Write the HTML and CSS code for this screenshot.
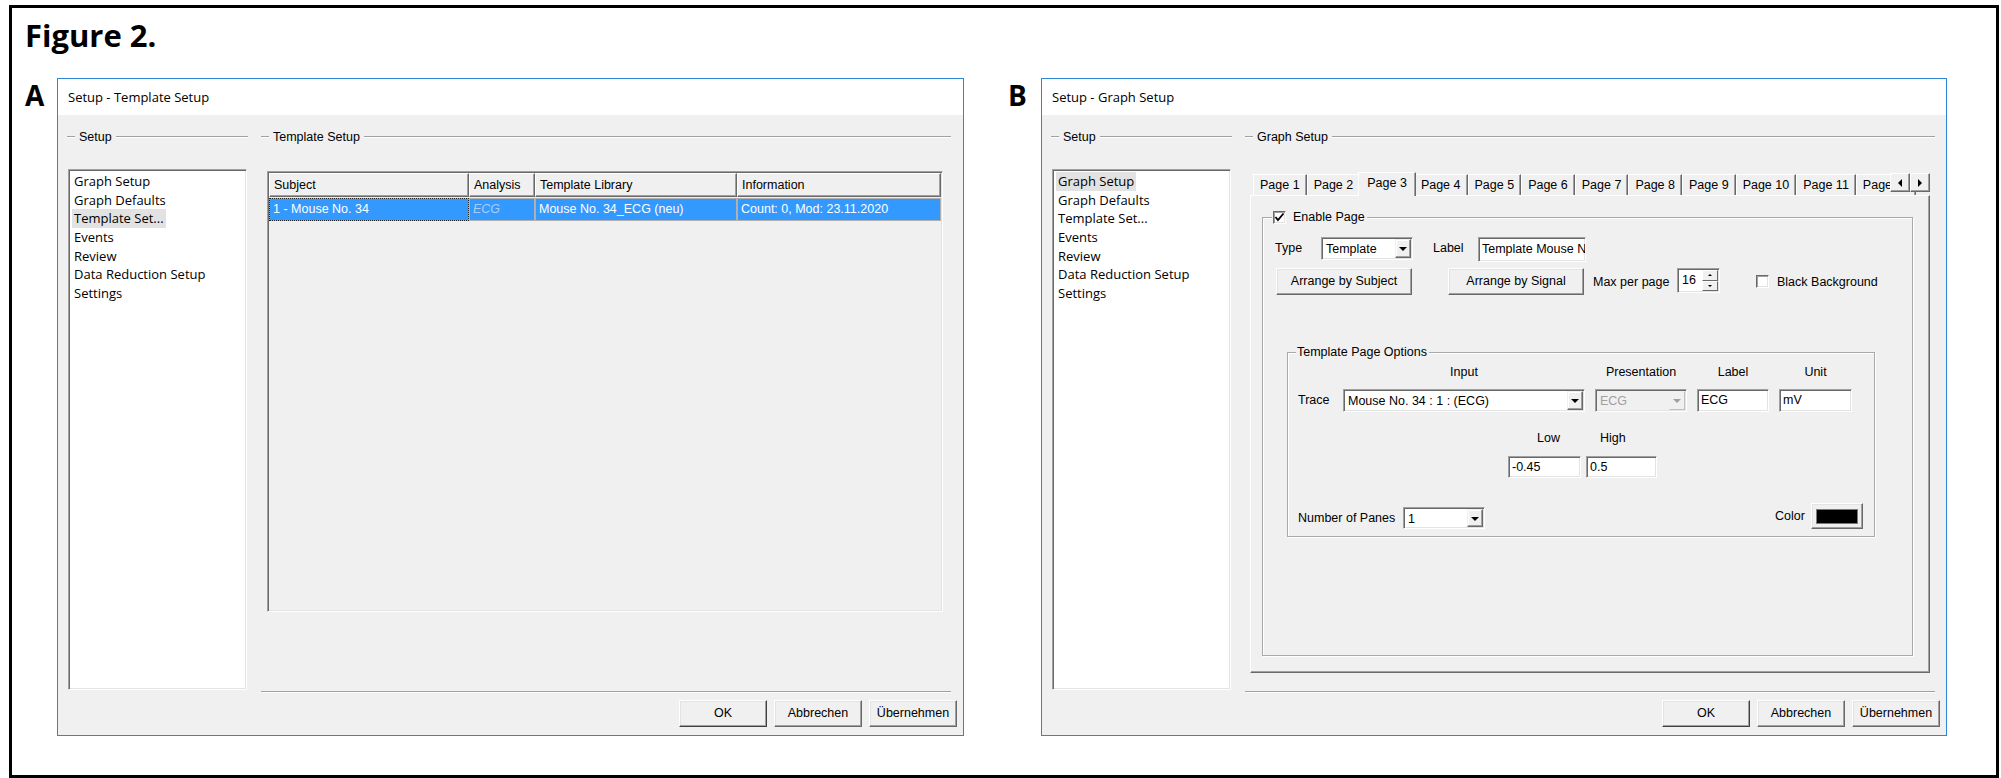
FILE: index.html
```html
<!DOCTYPE html>
<html lang="en">
<head>
<meta charset="utf-8">
<title>Figure 2</title>
<link rel="stylesheet" href="styles.css">
</head>
<body>
<div class="frame">
  <h1 class="fig-title">Figure 2.</h1>
  <div class="panels">
    <div class="panel">
      <div class="panel-label">A</div>
      <div class="dlg dlg-a">
        <div class="titlebar">Setup - Template Setup</div>
        <div class="dlg-body">
          <div class="dlg-grid">
            <div class="grp-hdr"><span>Setup</span></div>
            <div class="grp-hdr"><span>Template Setup</span></div>
            <ul class="listbox">
              <li>Graph Setup</li>
              <li>Graph Defaults</li>
              <li class="sel">Template Set...</li>
              <li>Events</li>
              <li>Review</li>
              <li>Data Reduction Setup</li>
              <li>Settings</li>
            </ul>
            <div class="rightcol">
              <div class="lv">
                <div class="lv-head">
                  <div class="lv-h c-subj">Subject</div>
                  <div class="lv-h c-ana">Analysis</div>
                  <div class="lv-h c-lib">Template Library</div>
                  <div class="lv-h c-info">Information</div>
                </div>
                <div class="lv-row">
                  <div class="lv-c c-subj focus">1 - Mouse No. 34</div>
                  <div class="lv-c c-ana dis">ECG</div>
                  <div class="lv-c c-lib">Mouse No. 34_ECG (neu)</div>
                  <div class="lv-c c-info">Count: 0, Mod: 23.11.2020</div>
                </div>
              </div>
            </div>
          </div>
          <div class="btnrow">
            <div class="btn dbtn default">OK</div>
            <div class="btn dbtn">Abbrechen</div>
            <div class="btn dbtn">Übernehmen</div>
          </div>
        </div>
      </div>
    </div>

    <div class="panel panel-b">
      <div class="panel-label lbl-b">B</div>
      <div class="dlg dlg-b">
        <div class="titlebar">Setup - Graph Setup</div>
        <div class="dlg-body">
          <div class="dlg-grid">
            <div class="grp-hdr"><span>Setup</span></div>
            <div class="grp-hdr"><span>Graph Setup</span></div>
            <ul class="listbox">
              <li class="sel">Graph Setup</li>
              <li>Graph Defaults</li>
              <li>Template Set...</li>
              <li>Events</li>
              <li>Review</li>
              <li>Data Reduction Setup</li>
              <li>Settings</li>
            </ul>
            <div class="rightcol">
              <div class="tabs">
                <div class="tabstrip">
                  <div class="tab">Page 1</div>
                  <div class="tab">Page 2</div>
                  <div class="tab sel">Page 3</div>
                  <div class="tab">Page 4</div>
                  <div class="tab">Page 5</div>
                  <div class="tab">Page 6</div>
                  <div class="tab">Page 7</div>
                  <div class="tab">Page 8</div>
                  <div class="tab">Page 9</div>
                  <div class="tab">Page 10</div>
                  <div class="tab">Page 11</div>
                  <div class="tab">Page 12</div>
                  <div class="tabscroll">
                    <div class="sbtn"><span class="tri-l"></span></div>
                    <div class="sbtn"><span class="tri-r"></span></div>
                  </div>
                </div>
                <div class="tabpanel">
                  <div class="grp grp-enable">
                    <div class="legend legend-enable">
                      <span class="chk">
                        <svg width="11" height="11" viewBox="0 0 11 11"><polyline points="1.5,5 4,8 9.5,1.5" fill="none" stroke="#000" stroke-width="1.8"/></svg>
                      </span>
                      <span>Enable Page</span>
                    </div>
                    <div class="row1">
                      <span class="lbl lbl-type">Type</span>
                      <div class="combo combo-type"><span class="val">Template</span><span class="drop"><span class="tri-d"></span></span></div>
                      <span class="lbl lbl-label">Label</span>
                      <div class="field field-label">Template Mouse No. 34</div>
                    </div>
                    <div class="row2">
                      <div class="btn abtn">Arrange by Subject</div>
                      <div class="btn abtn abtn2">Arrange by Signal</div>
                      <span class="lbl lbl-max">Max per page</span>
                      <div class="spin"><span class="spin-v">16</span><span class="spin-btns"><span class="sb"><span class="tri-us"></span></span><span class="sb"><span class="tri-ds"></span></span></span></div>
                      <span class="chk chk-bb"></span>
                      <span class="lbl">Black Background</span>
                    </div>
                    <div class="grp grp-tpo">
                      <div class="legend legend-tpo">Template Page Options</div>
                      <div class="tpo-grid">
                        <span class="colh gc2">Input</span>
                        <span class="colh gc3">Presentation</span>
                        <span class="colh gc4">Label</span>
                        <span class="colh gc5">Unit</span>
                        <span class="lbl lbl-trace">Trace</span>
                        <div class="combo"><span class="val">Mouse No. 34 : 1 : (ECG)</span><span class="drop"><span class="tri-d"></span></span></div>
                        <div class="combo disabled"><span class="val">ECG</span><span class="drop"><span class="tri-d"></span></span></div>
                        <div class="field">ECG</div>
                        <div class="field">mV</div>
                      </div>
                      <div class="lh-labels">
                        <span class="lbl-low">Low</span>
                        <span class="lbl-high">High</span>
                      </div>
                      <div class="lh-fields">
                        <div class="field">-0.45</div>
                        <div class="field">0.5</div>
                      </div>
                      <div class="tpo-bottom">
                        <div class="panes">
                          <span class="lbl lbl-panes">Number of Panes</span>
                          <div class="combo combo-panes"><span class="val">1</span><span class="drop"><span class="tri-d"></span></span></div>
                        </div>
                        <div class="colorbox">
                          <span class="lbl lbl-color">Color</span>
                          <div class="btn colorbtn"><span class="swatch"></span></div>
                        </div>
                      </div>
                    </div>
                  </div>
                </div>
              </div>
            </div>
          </div>
          <div class="btnrow">
            <div class="btn dbtn default">OK</div>
            <div class="btn dbtn">Abbrechen</div>
            <div class="btn dbtn">Übernehmen</div>
          </div>
        </div>
      </div>
    </div>
  </div>
</div>
</body>
</html>
```

FILE: styles.css
```css
html, body {
  margin: 0;
  padding: 0;
  overflow: hidden;
  background: #fff;
}
body {
  font-family: "Liberation Sans", Arial, sans-serif;
  font-size: 12.5px;
  color: #000;
}
.frame {
  box-sizing: border-box;
  margin: 5px 2px 0 9px;
  height: 773px;
  border: 3px solid #000;
}
.fig-title {
  margin: 7px 0 0 13px;
  font-family: "Open Sans", sans-serif;
  font-weight: 700;
  font-size: 31px;
  line-height: 40px;
}
.panels {
  display: flex;
  margin-top: 23px;
  padding-left: 13px;
}
.panel {
  display: flex;
  align-items: flex-start;
}
.panel-b {
  margin-left: 44px;
}
.panel-label {
  width: 32px;
  font-family: "Open Sans", sans-serif;
  font-weight: 700;
  font-size: 28px;
  line-height: 34px;
}
.lbl-b {
  width: 33px;
}
.dlg {
  box-sizing: border-box;
  height: 658px;
  border: 1px solid #2f86d3;
  background: #f0f0f0;
}
.dlg-a { width: 907px; }
.dlg-b { width: 906px; }
.titlebar {
  height: 36px;
  line-height: 36px;
  background: #fff;
  padding-left: 10px;
  font-family: "Open Sans", sans-serif;
  font-size: 13px;
}
.dlg-body {
  height: 620px;
}
.dlg-grid {
  display: grid;
  grid-template-columns: 181px 690px;
  grid-template-rows: 14px 548px;
  column-gap: 13px;
  padding: 15px 0 0 9px;
}
.grp-hdr {
  display: flex;
  align-items: center;
  height: 14px;
  font-size: 12.5px;
}
.grp-hdr::before,
.grp-hdr::after {
  content: "";
  border-top: 1px solid #a0a0a0;
  border-bottom: 1px solid #fff;
}
.grp-hdr::before { width: 8px; }
.grp-hdr::after { flex: 1; }
.grp-hdr span { padding: 0 4px; }

.listbox {
  list-style: none;
  box-sizing: border-box;
  margin: 25px 1px 0;
  height: 521px;
  padding: 2px 0 0 3px;
  background: #fff;
  border: 1px solid;
  border-color: #a0a0a0 #fff #fff #a0a0a0;
  box-shadow: inset 1px 1px 0 #696969, inset -1px -1px 0 #e3e3e3;
  font-family: "Open Sans", sans-serif;
  font-size: 13px;
}
.listbox li {
  width: fit-content;
  height: 18.7px;
  line-height: 18.7px;
  padding: 0 2px;
}
.listbox li.sel {
  background: #e2e2e2;
}
.rightcol {
  box-sizing: border-box;
  margin-top: 25px;
  height: 523px;
  border-bottom: 1px solid #a0a0a0;
  box-shadow: 0 1px 0 #fff;
}
.btnrow {
  display: flex;
  justify-content: flex-end;
  gap: 7px;
  padding: 8px 6px 0 0;
}

/* generic 3D controls */
.btn {
  box-sizing: border-box;
  background: #f0f0f0;
  border: 1px solid;
  border-color: #fff #696969 #696969 #fff;
  box-shadow: inset -1px -1px 0 #a0a0a0, inset 1px 1px 0 #e3e3e3;
  text-align: center;
  white-space: nowrap;
}
.dbtn {
  width: 88px;
  height: 27px;
  line-height: 25px;
}
.dbtn.default {
  border-color: #fff #404040 #404040 #fff;
}
.field,
.combo,
.spin {
  box-sizing: border-box;
  background: #fff;
  border: 1px solid;
  border-color: #a0a0a0 #fff #fff #a0a0a0;
  box-shadow: inset 1px 1px 0 #696969, inset -1px -1px 0 #e3e3e3;
  white-space: nowrap;
  overflow: hidden;
}
.field {
  height: 23px;
  line-height: 21px;
  padding-left: 3px;
}
.combo {
  display: flex;
  height: 23px;
  padding: 1px;
}
.combo .val {
  flex: 1;
  line-height: 20px;
  padding-left: 3px;
  overflow: hidden;
}
.drop {
  display: flex;
  align-items: center;
  justify-content: center;
  width: 16px;
  box-sizing: border-box;
  background: #f0f0f0;
  border: 1px solid;
  border-color: #f0f0f0 #696969 #696969 #f0f0f0;
  box-shadow: inset -1px -1px 0 #a0a0a0, inset 1px 1px 0 #fff;
}
.tri-d {
  width: 0;
  height: 0;
  border-left: 4px solid transparent;
  border-right: 4px solid transparent;
  border-top: 4px solid #000;
  margin-top: 1px;
}
.combo.disabled {
  background: #f0f0f0;
  color: #a0a0a0;
}
.combo.disabled .tri-d {
  border-top-color: #a0a0a0;
}
.combo.disabled .drop {
  border-color: #f0f0f0 #c0c0c0 #c0c0c0 #f0f0f0;
  box-shadow: none;
}

/* list view (A) */
.lv {
  box-sizing: border-box;
  margin: 2px 0 0 6px;
  width: 676px;
  height: 441px;
  padding: 1px;
  background: #f0f0f0;
  border: 1px solid;
  border-color: #a0a0a0 #fff #fff #a0a0a0;
  box-shadow: inset 1px 1px 0 #696969, inset -1px -1px 0 #e3e3e3;
}
.lv-head,
.lv-row {
  display: flex;
}
.c-subj { width: 200px; }
.c-ana { width: 66px; }
.c-lib { width: 202px; }
.c-info { width: 204px; }
.lv-h {
  box-sizing: border-box;
  height: 24px;
  line-height: 22px;
  padding-left: 4px;
  background: #f0f0f0;
  border: 1px solid;
  border-color: #fff #696969 #696969 #fff;
  box-shadow: inset -1px -1px 0 #a0a0a0;
  white-space: nowrap;
  overflow: hidden;
}
.lv-row {
  margin-top: 1px;
}
.lv-c {
  box-sizing: border-box;
  height: 23px;
  line-height: 20px;
  padding-left: 3px;
  background: #3399ff;
  color: #fff;
  border: 1px solid #b0b0b0;
  white-space: nowrap;
  overflow: hidden;
}
.lv-c.focus {
  outline: 1px dotted #222;
  outline-offset: -1px;
}
.lv-c.dis {
  color: #a9cdf5;
  font-style: italic;
}

/* tabs (B) */
.tabs {
  margin: 3px 0 0 5px;
  width: 680px;
}
.tabstrip {
  position: relative;
  z-index: 1;
  display: flex;
  align-items: flex-end;
  height: 24px;
  margin-bottom: -1px;
  padding-left: 3px;
  overflow: hidden;
}
.tab {
  flex: none;
  box-sizing: border-box;
  height: 21px;
  margin-bottom: 1px;
  padding: 0 6px;
  line-height: 20px;
  border-top: 1px solid #fff;
  border-left: 1px solid #fff;
  border-right: 1px solid #696969;
  box-shadow: inset -1px 0 0 #a0a0a0;
  white-space: nowrap;
}
.tab.sel {
  position: relative;
  height: 24px;
  margin: 0 -2px;
  padding: 0 8px 2px;
  line-height: 20px;
  background: #f0f0f0;
}
.tabscroll {
  position: absolute;
  right: 0;
  top: 1px;
  display: flex;
}
.sbtn {
  box-sizing: border-box;
  width: 20px;
  height: 19px;
  display: flex;
  align-items: center;
  justify-content: center;
  background: #f0f0f0;
  border: 1px solid;
  border-color: #fff #696969 #696969 #fff;
  box-shadow: inset -1px -1px 0 #a0a0a0;
}
.tri-l {
  border-top: 4px solid transparent;
  border-bottom: 4px solid transparent;
  border-right: 4px solid #000;
}
.tri-r {
  border-top: 4px solid transparent;
  border-bottom: 4px solid transparent;
  border-left: 4px solid #000;
}
.tabpanel {
  box-sizing: border-box;
  height: 478px;
  padding: 21px 16px 16px 11px;
  border: 1px solid;
  border-color: #fff #696969 #696969 #fff;
  box-shadow: inset -1px -1px 0 #a0a0a0;
}
.grp {
  position: relative;
  box-sizing: border-box;
  border: 1px solid #a9a9a9;
  box-shadow: inset 1px 1px 0 #fff, 1px 1px 0 #fff;
}
.grp-enable {
  height: 439px;
  padding-top: 19px;
}
.legend {
  position: absolute;
  top: -8px;
  display: flex;
  align-items: center;
  gap: 7px;
  padding: 0 2px 0 1px;
  height: 14px;
  line-height: 14px;
  background: #f0f0f0;
}
.legend-enable {
  left: 9px;
  font-size: 12.5px;
}
.legend-tpo {
  left: 8px;
}
.chk {
  box-sizing: border-box;
  display: inline-flex;
  align-items: center;
  justify-content: center;
  width: 13px;
  height: 13px;
  background: #fff;
  border: 1px solid;
  border-color: #696969 #fff #fff #696969;
  box-shadow: inset 1px 1px 0 #a0a0a0, inset -1px -1px 0 #e3e3e3;
}
.chk svg {
  display: block;
}
.lbl {
  white-space: nowrap;
}
.row1 {
  display: flex;
  align-items: flex-start;
  height: 25px;
  padding-left: 12px;
}
.row1 .lbl {
  line-height: 23px;
}
.lbl-type { width: 46px; }
.combo-type { width: 92px; }
.lbl-label { width: 45px; margin-left: 20px; }
.field-label {
  width: 108px;
  height: 25px;
  line-height: 23px;
}
.row2 {
  display: flex;
  align-items: center;
  height: 27px;
  margin-top: 6px;
  padding-left: 13px;
}
.abtn {
  width: 136px;
  height: 27px;
  line-height: 25px;
}
.abtn2 { margin-left: 36px; }
.lbl-max {
  width: 84px;
  margin-left: 9px;
}
.spin {
  display: flex;
  width: 43px;
  height: 25px;
  align-self: flex-start;
  padding: 1px;
}
.spin-v {
  flex: 1;
  padding-left: 3px;
  line-height: 21px;
}
.spin-btns {
  display: flex;
  flex-direction: column;
  width: 16px;
}
.sb {
  flex: 1;
  display: flex;
  align-items: center;
  justify-content: center;
  box-sizing: border-box;
  background: #f0f0f0;
  border: 1px solid;
  border-color: #fff #696969 #696969 #fff;
}
.tri-us {
  border-left: 2px solid transparent;
  border-right: 2px solid transparent;
  border-bottom: 2px solid #000;
}
.tri-ds {
  border-left: 2px solid transparent;
  border-right: 2px solid transparent;
  border-top: 2px solid #000;
}
.chk-bb {
  margin: 0 8px 0 36px;
}
.grp-tpo {
  height: 185px;
  width: 588px;
  margin: 57px 0 0 24px;
  padding: 12px 0 0 10px;
}
.tpo-grid {
  display: grid;
  grid-template-columns: 35px 242px 92px 72px 73px;
  grid-template-rows: 14px 23px;
  column-gap: 10px;
  row-gap: 10px;
}
.colh {
  text-align: center;
  line-height: 14px;
  white-space: nowrap;
}
.gc2 { grid-column: 2; }
.gc3 { grid-column: 3; }
.gc4 { grid-column: 4; }
.gc5 { grid-column: 5; }
.lbl-trace {
  grid-column: 1;
  line-height: 23px;
}
.lh-labels {
  display: flex;
  margin: 19px 0 0 210px;
  height: 14px;
  line-height: 14px;
}
.lbl-low { width: 78px; padding-left: 29px; box-sizing: border-box; }
.lbl-high { padding-left: 14px; }
.lh-fields {
  display: grid;
  grid-template-columns: 73px 71px;
  column-gap: 5px;
  margin: 11px 0 0 210px;
}
.lh-fields .field {
  height: 22px;
  line-height: 20px;
}
.tpo-bottom {
  display: flex;
  justify-content: space-between;
  align-items: flex-end;
  margin-top: 25px;
  padding-right: 11px;
  height: 26px;
}
.panes,
.colorbox {
  display: flex;
  align-items: flex-end;
}
.lbl-panes {
  width: 105px;
  line-height: 22px;
}
.combo-panes {
  width: 82px;
  height: 22px;
}
.lbl-color {
  width: 36px;
  line-height: 26px;
}
.colorbtn {
  width: 52px;
  height: 26px;
  display: flex;
  align-items: center;
  justify-content: center;
}
.swatch {
  width: 40px;
  height: 13px;
  background: #000;
  border: 1px solid #7a7a7a;
}
```
